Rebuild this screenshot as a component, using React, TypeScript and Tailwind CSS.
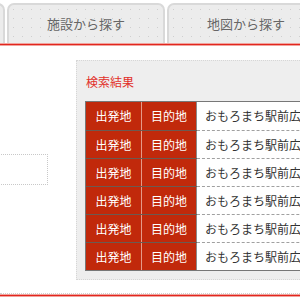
const rows = Array.from({ length: 6 }, () => ({
  from: '出発地',
  to: '目的地',
  name: 'おもろまち駅前広場',
}));

const tabClass =
  'shrink-0 w-[158px] h-[40px] flex items-center justify-center rounded-t-[7px] border-2 border-b-0 border-[#d9d9d9] bg-[#ececec] bg-[radial-gradient(#cfcfcf_0.8px,transparent_1px)] bg-[length:9px_9px] text-[13px] text-[#666]';

export default function App() {
  return (
    <div
      className="w-[300px] h-[300px] overflow-hidden bg-white"
      style={{ fontFamily: '"Noto Sans CJK JP", "Noto Sans", sans-serif' }}
    >
      {/* tabs */}
      <div className="flex gap-[2px] pt-[3px]">
        <div className={`${tabClass} -ml-[153px]`}>駅から探す</div>
        <div className={tabClass}>施設から探す</div>
        <div className={tabClass}>地図から探す</div>
      </div>
      <div className="h-[3px] bg-[#e2261d] border-y border-[#f0a39e]" />

      <div className="flex pt-[14px]">
        {/* left column */}
        <div className="w-[76px] shrink-0">
          <div className="mt-[94px] -ml-[13px] w-[61px] h-[31px] border border-dotted border-[#c8c8c8] bg-white" />
        </div>

        {/* results panel */}
        <div className="shrink-0 w-[260px] h-[220px] border border-dotted border-[#d6d6d6] bg-[#eeeeee] pl-[8px] pt-[13px]">
          <div className="text-[12px] leading-[16px] text-[#e2302a] pl-[1px] mb-[11px]">検索結果</div>
          <div className="w-[260px] border border-[#777]">
            {rows.map((r, i) => (
              <div key={i} className={`flex h-[28px] ${i > 0 ? 'border-t border-[#6b5a52]' : ''}`}>
                <div className="w-[56px] shrink-0 flex items-center justify-center bg-[#c1290b] text-white text-[12px] border-r border-[#e59a88]">
                  {r.from}
                </div>
                <div className="w-[55px] shrink-0 flex items-center justify-center bg-[#c1290b] text-white text-[12px] border-r border-[#8a8a8a]">
                  {r.to}
                </div>
                <div
                  className={`flex-1 flex items-center pl-[8px] bg-white text-[12px] text-[#333] whitespace-nowrap ${
                    i > 0 ? '-mt-px border-t border-dashed border-[#a0a0a0]' : ''
                  }`}
                >
                  {r.name}
                </div>
              </div>
            ))}
          </div>
        </div>
      </div>

      <div className="mt-[13px] border-t border-dotted border-[#d0d0d0]" />
      <div className="h-[3px] bg-[#e2261d] border-y border-[#f0a39e]" />
    </div>
  );
}
